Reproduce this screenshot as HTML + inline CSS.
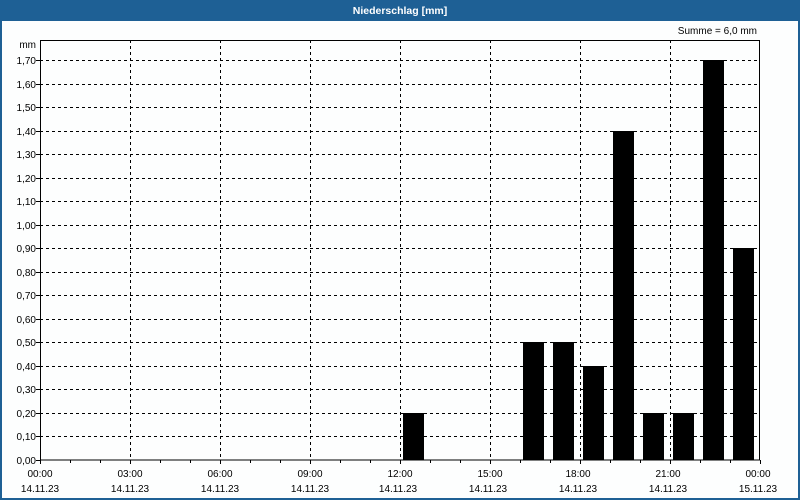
<!DOCTYPE html>
<html><head><meta charset="utf-8"><style>
html,body{margin:0;padding:0;background:#fff;}
body{width:800px;height:500px;overflow:hidden;position:relative;font-family:"Liberation Sans","DejaVu Sans",sans-serif;}
</style></head><body>
<svg width="800" height="500" xmlns="http://www.w3.org/2000/svg" style="position:absolute;left:0;top:0;font-family:'Liberation Sans',sans-serif;font-size:10px">
<rect x="0" y="0" width="800" height="500" fill="#1e6095"/>
<rect x="2" y="21" width="796" height="477" fill="#fdfefe"/>
<text x="400" y="14" fill="#fff" font-weight="bold" text-anchor="middle" font-size="10.5">Niederschlag [mm]</text>
<text x="757" y="34" text-anchor="end" fill="#000">Summe = 6,0 mm</text>
<text x="36" y="48" text-anchor="end" fill="#000">mm</text>
<g id="grid" stroke="#000" stroke-width="1" stroke-dasharray="3,3" shape-rendering="crispEdges">
<line x1="40" x2="760" y1="60.5" y2="60.5"/><line x1="40" x2="760" y1="84.5" y2="84.5"/><line x1="40" x2="760" y1="107.5" y2="107.5"/><line x1="40" x2="760" y1="131.5" y2="131.5"/><line x1="40" x2="760" y1="154.5" y2="154.5"/><line x1="40" x2="760" y1="178.5" y2="178.5"/><line x1="40" x2="760" y1="201.5" y2="201.5"/><line x1="40" x2="760" y1="225.5" y2="225.5"/><line x1="40" x2="760" y1="248.5" y2="248.5"/><line x1="40" x2="760" y1="272.5" y2="272.5"/><line x1="40" x2="760" y1="295.5" y2="295.5"/><line x1="40" x2="760" y1="319.5" y2="319.5"/><line x1="40" x2="760" y1="342.5" y2="342.5"/><line x1="40" x2="760" y1="366.5" y2="366.5"/><line x1="40" x2="760" y1="389.5" y2="389.5"/><line x1="40" x2="760" y1="413.5" y2="413.5"/><line x1="40" x2="760" y1="436.5" y2="436.5"/>
<line y1="40" y2="460" x1="130.5" x2="130.5"/><line y1="40" y2="460" x1="220.5" x2="220.5"/><line y1="40" y2="460" x1="310.5" x2="310.5"/><line y1="40" y2="460" x1="400.5" x2="400.5"/><line y1="40" y2="460" x1="490.5" x2="490.5"/><line y1="40" y2="460" x1="580.5" x2="580.5"/><line y1="40" y2="460" x1="670.5" x2="670.5"/>
</g>
<g fill="#000" shape-rendering="crispEdges">
<rect x="403" y="413" width="21" height="47"/>
<rect x="523" y="342" width="21" height="118"/>
<rect x="553" y="342" width="21" height="118"/>
<rect x="583" y="366" width="21" height="94"/>
<rect x="613" y="131" width="21" height="329"/>
<rect x="643" y="413" width="21" height="47"/>
<rect x="673" y="413" width="21" height="47"/>
<rect x="703" y="60" width="21" height="400"/>
<rect x="733" y="248" width="21" height="212"/>
</g>
<rect x="40.5" y="40.5" width="719" height="419.5" fill="none" stroke="#000" stroke-width="1" shape-rendering="crispEdges"/>
<g stroke="#000" shape-rendering="crispEdges">
<path d="M40.5 460v4M70.5 460v3M100.5 460v3M130.5 460v4M160.5 460v3M190.5 460v3M220.5 460v4M250.5 460v3M280.5 460v3M310.5 460v4M340.5 460v3M370.5 460v3M400.5 460v4M430.5 460v3M460.5 460v3M490.5 460v4M520.5 460v3M550.5 460v3M580.5 460v4M610.5 460v3M640.5 460v3M670.5 460v4M700.5 460v3M730.5 460v3M760.5 460v4M36 60.5h4M36 84.5h4M36 107.5h4M36 131.5h4M36 154.5h4M36 178.5h4M36 201.5h4M36 225.5h4M36 248.5h4M36 272.5h4M36 295.5h4M36 319.5h4M36 342.5h4M36 366.5h4M36 389.5h4M36 413.5h4M36 436.5h4M36 460.5h4"/>
</g>
<g text-anchor="end" fill="#000">
<text x="36" y="64">1,70</text><text x="36" y="88">1,60</text><text x="36" y="111">1,50</text><text x="36" y="135">1,40</text><text x="36" y="158">1,30</text><text x="36" y="182">1,20</text><text x="36" y="205">1,10</text><text x="36" y="229">1,00</text><text x="36" y="252">0,90</text><text x="36" y="276">0,80</text><text x="36" y="299">0,70</text><text x="36" y="323">0,60</text><text x="36" y="346">0,50</text><text x="36" y="370">0,40</text><text x="36" y="393">0,30</text><text x="36" y="417">0,20</text><text x="36" y="440">0,10</text><text x="36" y="464">0,00</text>
</g>
<g text-anchor="middle" fill="#000">
<text x="40" y="477">00:00</text><text x="40" y="492">14.11.23</text>
<text x="130" y="477">03:00</text><text x="130" y="492">14.11.23</text>
<text x="220" y="477">06:00</text><text x="220" y="492">14.11.23</text>
<text x="310" y="477">09:00</text><text x="310" y="492">14.11.23</text>
<text x="400" y="477">12:00</text><text x="398" y="492">14.11.23</text>
<text x="490" y="477">15:00</text><text x="488" y="492">14.11.23</text>
<text x="578" y="477">18:00</text><text x="578" y="492">14.11.23</text>
<text x="668" y="477">21:00</text><text x="668" y="492">14.11.23</text>
<text x="758" y="477">00:00</text><text x="758" y="492">15.11.23</text>
</g>
</svg>
</body></html>
